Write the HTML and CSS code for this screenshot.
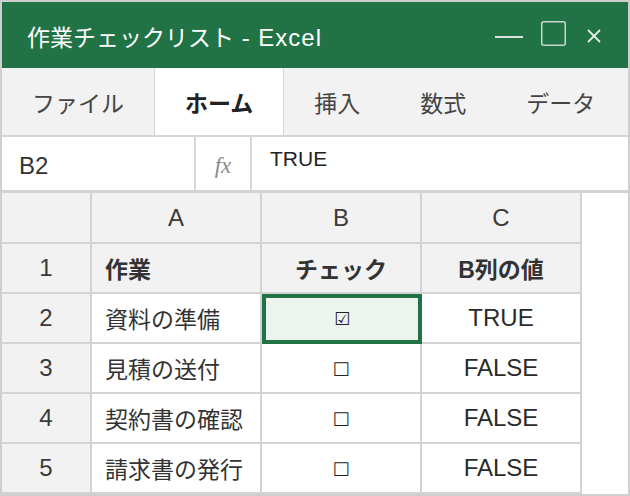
FILE: index.html
```html
<!DOCTYPE html>
<html lang="ja">
<head>
  <meta charset="UTF-8" />
  <meta name="viewport" content="width=device-width, initial-scale=1.0" />
  <title>作業チェックリスト - Excel</title>
  <link rel="stylesheet" href="styles.css">
</head>
<body>
  <div class="window">
    <header class="titlebar">
      <span class="title">作業チェックリスト<span class="app"> - Excel</span></span>
      <div class="controls">
        <svg class="ctl-min" width="28" height="24" viewBox="0 0 28 24"><line x1="0" y1="15" x2="28" y2="15" /></svg>
        <svg class="ctl-max" width="25" height="25" viewBox="0 0 25 25"><rect x="0.75" y="0.75" width="23.5" height="23.5" rx="2" /></svg>
        <svg class="ctl-close" width="14" height="14" viewBox="0 0 14 14"><line x1="1" y1="1" x2="13" y2="13" /><line x1="13" y1="1" x2="1" y2="13" /></svg>
      </div>
    </header>

    <nav class="ribbon">
      <span class="tab">ファイル</span>
      <span class="tab active">ホーム</span>
      <span class="tab">挿入</span>
      <span class="tab">数式</span>
      <span class="tab">データ</span>
    </nav>

    <div class="formula-bar">
      <div class="name-box">B2</div>
      <div class="fx">fx</div>
      <div class="formula">TRUE</div>
    </div>

    <div class="sheet">
      <div class="cell corner"></div>
      <div class="cell head">A</div>
      <div class="cell head">B</div>
      <div class="cell head">C</div>

      <div class="cell rownum">1</div>
      <div class="cell label left">作業</div>
      <div class="cell label">チェック</div>
      <div class="cell label">B列の値</div>

      <div class="cell rownum">2</div>
      <div class="cell left">資料の準備</div>
      <div class="cell selected"><span class="check">☑</span></div>
      <div class="cell val">TRUE</div>

      <div class="cell rownum">3</div>
      <div class="cell left">見積の送付</div>
      <div class="cell"><span class="check">□</span></div>
      <div class="cell val">FALSE</div>

      <div class="cell rownum">4</div>
      <div class="cell left">契約書の確認</div>
      <div class="cell"><span class="check">□</span></div>
      <div class="cell val">FALSE</div>

      <div class="cell rownum">5</div>
      <div class="cell left">請求書の発行</div>
      <div class="cell"><span class="check">□</span></div>
      <div class="cell val">FALSE</div>
    </div>
  </div>
</body>
</html>
```

FILE: styles.css
```css
body {
  margin: 0;
  padding: 0;
  font-family: "Liberation Sans", "Noto Sans CJK JP", sans-serif;
  color: #333;
  background: #fff;
}
.window {
  width: 630px;
  height: 496px;
  box-sizing: border-box;
  border: 2px solid #cfcfcf;
  background: #fff;
  overflow: hidden;
}
.titlebar {
  height: 66px;
  background-color: #217346;
  color: #fff;
  display: flex;
  align-items: center;
  padding: 0 27px 0 25px;
  font-size: 23px;
}
.title {
  padding-top: 1px;
  white-space: pre;
}
.title .app {
  font-size: 24px;
  letter-spacing: 1px;
}
.controls {
  margin-left: auto;
  display: flex;
  align-items: center;
}
.controls svg {
  display: block;
  fill: none;
  stroke-linecap: butt;
}
.ctl-min {
  stroke: #d9e3dd;
  stroke-width: 2;
  margin-right: 18px;
  margin-top: -2px;
}
.ctl-max {
  stroke: #c9d6ce;
  stroke-width: 1.5;
  margin-right: 21px;
  margin-top: -4px;
}
.ctl-close {
  stroke: #e4ece7;
  stroke-width: 1.8;
  margin-top: 2px;
}
.ribbon {
  height: 67px;
  display: flex;
  background-color: #f2f2f2;
  border-bottom: 2px solid #d6d6d6;
  font-size: 23px;
  color: #444;
  white-space: nowrap;
}
.tab {
  display: flex;
  align-items: center;
  padding: 0 30px;
  flex-shrink: 0;
}
.tab.active {
  background-color: #fff;
  color: #222;
  font-weight: bold;
  border-left: 1px solid #d6d6d6;
  border-right: 1px solid #d6d6d6;
}
.formula-bar {
  height: 53px;
  display: flex;
  border-bottom: 3px solid #d3d3d3;
}
.name-box {
  width: 175px;
  padding: 5px 0 0 17px;
  border-right: 2px solid #d6d6d6;
  display: flex;
  align-items: center;
  font-size: 24px;
  color: #333;
}
.fx {
  width: 56px;
  border-right: 2px solid #d6d6d6;
  display: flex;
  align-items: center;
  justify-content: center;
  padding-top: 4px;
  box-sizing: border-box;
  font-family: "Liberation Serif", serif;
  font-style: italic;
  font-size: 23px;
  color: #8a8a8a;
}
.formula {
  padding: 9px 0 0 18px;
  font-size: 21px;
  line-height: 1.2;
  color: #222;
}
.sheet {
  display: grid;
  grid-template-columns: 90px 170px 160px 160px;
  grid-template-rows: 51px repeat(5, 50px);
  width: 580px;
}
.cell {
  box-sizing: border-box;
  border-right: 2px solid #d3d3d3;
  border-bottom: 2px solid #d3d3d3;
  display: flex;
  align-items: center;
  justify-content: center;
  font-size: 23px;
  color: #333;
  white-space: nowrap;
}
.corner,
.head,
.rownum,
.label {
  background-color: #f2f2f2;
}
.head,
.rownum {
  color: #3a3a3a;
  font-size: 24px;
}
.label {
  font-weight: bold;
}
.val {
  font-size: 24px;
  color: #2a2a2a;
}
.left {
  justify-content: flex-start;
  padding-left: 13px;
}
.selected {
  border: 4px solid #217346;
  background-color: #edf3ef;
}
.check {
  font-family: "DejaVu Sans", sans-serif;
  font-size: 18px;
  line-height: 1;
  color: #222;
}
```
